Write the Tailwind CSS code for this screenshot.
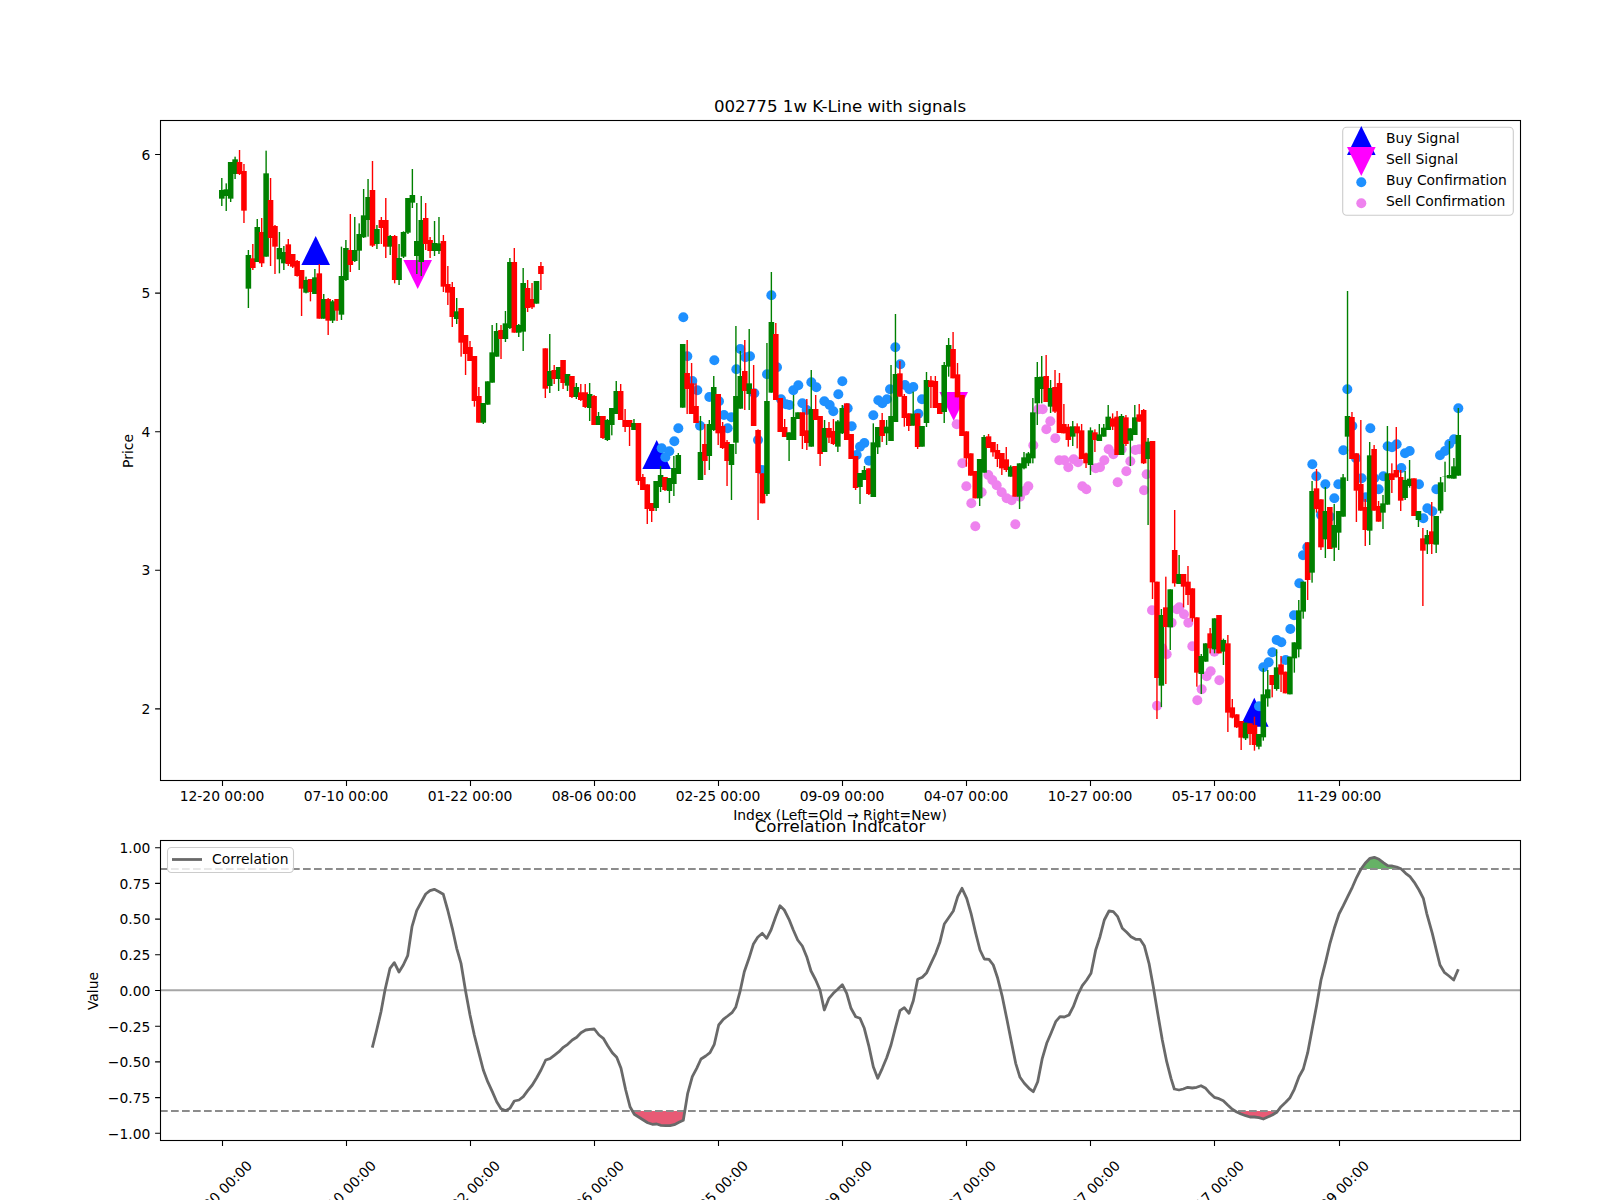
<!DOCTYPE html>
<html lang="en">

<head>
  <meta charset="UTF-8">
  <title>002775 1w K-Line with signals</title>
  <script src="https://cdn.jsdelivr.net/npm/@tailwindcss/browser@4"></script>
</head>

<body class="bg-white">
  <div class="w-[1600px] h-[1200px] overflow-hidden">
    <svg id="fig" width="1600" height="1200" viewBox="0 0 1600 1200" class="block font-['DejaVu_Sans',sans-serif] text-[13.89px] fill-black">
      <defs>
        <clipPath id="main-clip"><rect x="160" y="120" width="1360" height="660" /></clipPath>
      </defs>

      <!-- price chart: markers, then confirmations, then candles -->
      <g clip-path="url(#main-clip)">
        <g id="signals" class="fill-[#0000ff]">
          <polygon points="315.7,236 301.4,265 330,265" />
          <polygon points="656.7,440 642.4,469 671,469" />
          <polygon points="1254.3,697.7 1240,726.7 1268.6,726.7" />
        </g>
        <g class="fill-[#ff00ff]">
          <polygon points="417.7,289 403.4,260 432,260" />
          <polygon points="953.7,420.7 939.4,392 968,392" />
        </g>
        <g id="confirm"></g>
        <g id="candles"></g>
      </g>
      <rect x="160.5" y="120.5" width="1360" height="660" class="fill-none stroke-black" stroke-width="1.1" />

      <!-- price legend -->
      <rect x="1342.7" y="127.3" width="170.6" height="88" rx="4" class="fill-white/80 stroke-[#cccccc]" stroke-width="1.1" />
      <polygon points="1361.3,126 1347,155 1375.6,155" class="fill-[#0000ff]" />
      <polygon points="1361.3,176 1347,147 1375.6,147" class="fill-[#ff00ff]" />
      <circle cx="1361.3" cy="182.3" r="5" class="fill-[#1e90ff]" />
      <circle cx="1361.3" cy="203.3" r="5" class="fill-[#ee82ee]" />
      <text x="1386" y="143.3">Buy Signal</text>
      <text x="1386" y="164.3">Sell Signal</text>
      <text x="1386" y="185.3">Buy Confirmation</text>
      <text x="1386" y="206.3">Sell Confirmation</text>

      <text x="840" y="111.7" text-anchor="middle" class="text-[16.67px]">002775 1w K-Line with signals</text>
      <text x="840" y="820" text-anchor="middle">Index (Left=Old → Right=New)</text>
      <text text-anchor="middle" transform="translate(133 451) rotate(-90)">Price</text>

      <g id="main-yticks" text-anchor="end">
        <path d="M155.1 154.5H160M155.1 293.1H160M155.1 431.7H160M155.1 570.3H160M155.1 708.9H160" class="stroke-black fill-none" stroke-width="1.1" />
        <text x="150.3" y="159.5">6</text>
        <text x="150.3" y="298.1">5</text>
        <text x="150.3" y="436.7">4</text>
        <text x="150.3" y="575.3">3</text>
        <text x="150.3" y="713.9">2</text>
      </g>

      <g id="main-xticks" text-anchor="middle">
        <path d="M222.5 781v4.9M346.5 781v4.9M470.5 781v4.9M594.5 781v4.9M718.5 781v4.9M842.5 781v4.9M966.5 781v4.9M1090.5 781v4.9M1214.5 781v4.9M1339.5 781v4.9" class="stroke-black fill-none" stroke-width="1.1" />
        <text x="222" y="801">12-20 00:00</text>
        <text x="346" y="801">07-10 00:00</text>
        <text x="470" y="801">01-22 00:00</text>
        <text x="594" y="801">08-06 00:00</text>
        <text x="718" y="801">02-25 00:00</text>
        <text x="842" y="801">09-09 00:00</text>
        <text x="966" y="801">04-07 00:00</text>
        <text x="1090" y="801">10-27 00:00</text>
        <text x="1214" y="801">05-17 00:00</text>
        <text x="1339" y="801">11-29 00:00</text>
      </g>

      <!-- correlation chart -->
      <text x="840" y="831.7" text-anchor="middle" class="text-[16.67px]">Correlation Indicator</text>
      <g id="fills"></g>
      <path d="M160 990.3H1520" class="stroke-[#a6a6a6] fill-none" stroke-width="2" />
      <path d="M160 869H1520M160 1111H1520" class="stroke-[#8c8c8c] fill-none" stroke-width="2" stroke-dasharray="7.7 3.3" />
      <path id="corr" class="stroke-[#696969] fill-none" stroke-width="2.8" stroke-linejoin="round" />
      <rect x="160.5" y="840.5" width="1360" height="300" class="fill-none stroke-black" stroke-width="1.1" />

      <rect x="167.5" y="847.5" width="126" height="25" rx="4" class="fill-white/80 stroke-[#cccccc]" stroke-width="1.1" />
      <path d="M172 859.5H202" class="stroke-[#696969] fill-none" stroke-width="2.8" />
      <text x="212" y="864">Correlation</text>

      <text text-anchor="middle" transform="translate(98 991) rotate(-90)">Value</text>

      <g id="corr-yticks" text-anchor="end">
        <path d="M155.1 847.7H160M155.1 883.4H160M155.1 919.1H160M155.1 954.8H160M155.1 990.5H160M155.1 1026.2H160M155.1 1061.9H160M155.1 1097.6H160M155.1 1133.3H160" class="stroke-black fill-none" stroke-width="1.1" />
        <text x="150.3" y="853">1.00</text>
        <text x="150.3" y="888.7">0.75</text>
        <text x="150.3" y="924.4">0.50</text>
        <text x="150.3" y="960.1">0.25</text>
        <text x="150.3" y="995.8">0.00</text>
        <text x="150.3" y="1031.5">−0.25</text>
        <text x="150.3" y="1067.2">−0.50</text>
        <text x="150.3" y="1102.9">−0.75</text>
        <text x="150.3" y="1138.6">−1.00</text>
      </g>

      <g id="corr-xticks" text-anchor="middle">
        <path d="M222.5 1141v4.9M346.5 1141v4.9M470.5 1141v4.9M594.5 1141v4.9M718.5 1141v4.9M842.5 1141v4.9M966.5 1141v4.9M1090.5 1141v4.9M1214.5 1141v4.9M1339.5 1141v4.9" class="stroke-black fill-none" stroke-width="1.1" />
        <text y="5" transform="translate(219.5 1193) rotate(-45)">12-20 00:00</text>
        <text y="5" transform="translate(343.5 1193) rotate(-45)">07-10 00:00</text>
        <text y="5" transform="translate(467.5 1193) rotate(-45)">01-22 00:00</text>
        <text y="5" transform="translate(591.5 1193) rotate(-45)">08-06 00:00</text>
        <text y="5" transform="translate(715.5 1193) rotate(-45)">02-25 00:00</text>
        <text y="5" transform="translate(839.5 1193) rotate(-45)">09-09 00:00</text>
        <text y="5" transform="translate(963.5 1193) rotate(-45)">04-07 00:00</text>
        <text y="5" transform="translate(1087.5 1193) rotate(-45)">10-27 00:00</text>
        <text y="5" transform="translate(1211.5 1193) rotate(-45)">05-17 00:00</text>
        <text y="5" transform="translate(1336.5 1193) rotate(-45)">11-29 00:00</text>
      </g>
    </svg>
  </div>

  <script>
    const NS = 'http://www.w3.org/2000/svg';
    const X0 = 221.8, STEP = 4.432;

    function add(parent, tag, attrs) {
      const el = document.createElementNS(NS, tag);
      for (const k in attrs) el.setAttribute(k, attrs[k]);
      document.getElementById(parent).appendChild(el);
    }

    // candles read off the chart: colour, body top, body bottom, wick top, wick bottom
    // y values are crop coordinates, py = oy + v / 3
    const candleRows = [
      [110, 'g240,266,204,288 g238,258,220,303 g156,266,156,276 g148,192,140,207 r156,192,120,195 r183,302,162,339 g435,536,420,594 r445,474,402,480 g351,456,327,456 r366,460,324,471 g190,440,122,440 r270,384,204,468 r348,410,345,492 g414,448,366,490 g426,460,408,480 r403,462,387,468 r432,470,432,474 r453,498,450,500 r480,536,480,618 g510,548,500,550 r507,546,507,574 g502,552,477,552 r490,626,462,626 g567,626,552,626 r567,632,564,675 g574,632,570,639 r567,602,567,633 g498,614,410,630 g414,510,390,513 r420,465,312,486 g420,453,321,456 g372,422,340,480 g316,382,237,384 g261,330,207,380 r240,407,153,411 g357,402,345,417 r330,354,321,402 r330,410,264,444 g378,410,375,435 r378,510,375,520 g444,510,402,525 g366,440,364,444 g264,368,264,372 g255,278,177,294 g393,438,279,492 g330,456,258,498 r324,402,279,420 r390,423,381,444 g399,423,333,438 g400,423,321,432 r393,530,375,546 r522,548,468,585 r531,621,516,651 g604,627,564,642 r594,698,594,740 r675,732,675,795 r711,753,693,752 r738,873,738,890 r858,938,831,938 g879,938,879,942 g814,884,814,884 g727,818,645,818 g663,740,639,740 r660,687,645,747 g640,687,603,696 g456,654,444,657 r456,668,414,668 g645,668,642,681 g519,665,474,723 r534,594,510,606 r567,592,519,597 g513,581,513,581 r468,492,456,540'],
      [250, 'r295,416,295,444 g363,408,252,429 r360,387,345,402 g351,387,351,423 r330,399,330,417 g372,407,372,423 r378,441,378,444 g411,441,399,447 r427,450,402,453 r427,471,402,474 g432,474,399,513 r438,525,435,525 g498,525,486,525 r498,564,498,567 g510,570,507,573 g474,525,474,556 g423,492,393,492 r423,510,402,510 r510,531,477,546 r510,531,510,588 g519,540,507,540 r519,693,519,705 r681,720,672,720 r703,777,703,822 r759,783,759,816 g693,774,693,783 g675,711,648,726 r681,720,681,723 g684,723,684,759 g654,702,618,738 g615,672,609,672 g282,473,282,473 r369,417,270,492 r400,492,339,492 r468,519,400,519 g606,690,498,690 r582,633,522,675 g522,618,510,660 g411,540,378,543 r432,550,432,585 r528,594,516,597 r576,633,570,708 g582,645,582,750 g438,578,228,612 g378,476,303,476 r363,423,270,480 g400,432,237,480 r417,528,345,528 r540,669,538,810 r670,760,670,760 g453,732,279,738 g216,428,66,428 r252,450,219,450 r444,546,444,546 r531,561,507,561 g547,570,547,633 g501,570,435,570 g487,507,487,507 r487,558,487,597 r541,579,447,600 g477,590,360,590 r477,510,435,510 r498,612,498,648 g534,606,510,606 r534,563,516,579 r543,582,507,585 g514,590,510,606 g474,550,465,552 r460,570,460,570 r552,627,552,627 r618,714,618,720 g669,711,669,762 g660,690,648,690 r655,732,655,735 g577,741,520,741 g531,592,531,612 r510,558,489,576 g530,550,510,585 g498,573,345,573 g372,516,192,516 r370,440,333,440 r438,504,432,530 r490,528,490,543 g491,527,425,527 r490,591,490,597 g528,590,528,590 g390,519,366,531 r391,411,378,474 r393,474,378,474 r459,492,459,492 g345,486,336,519 g285,350,264,380'],
      [320, 'r87,175,36,175 r163,232,129,232 r225,348,225,348 r334,415,334,440 r400,467,400,467 r453,535,453,535 g417,535,417,558 g351,458,345,458 r349,384,342,384 r366,397,366,410 r390,417,372,441 r399,445,399,465 r418,450,381,456 g440,470,436,470 r438,530,438,530 g430,530,430,567 g412,445,396,448 g400,430,396,438 g277,415,234,430 g171,250,126,315 g170,207,108,250 r168,246,105,246 g204,260,180,279 r201,275,150,279 r189,339,159,339 r312,340,252,340 r320,360,312,380 g319,350,303,378 r319,340,310,385 r331,417,312,417 r400,430,398,444 g331,435,322,465 r337,360,328,396 g343,363,312,363 g323,350,312,350 g290,330,255,330 r295,320,280,330 r290,405,273,405 g288,405,282,405 r292,372,285,378 g325,362,325,438 g292,345,255,345 r283,305,252,305 r270,430,267,432 g365,417,354,615 r363,787,363,837 r785,1074,785,1197 g885,1097,867,1161 r862,921,770,1092 g808,922,808,990 r690,790,570,800 g762,792,705,792 r762,800,762,862 r785,825,738,855 r805,895,805,905 r892,1058,892,1100 g1008,1062,1002,1122 g970,1025,970,1025 r940,985,924,1000 g895,988,895,1000 r885,1000,885,1000 g960,995,956,1035 r970,1178,945,1236 r1162,1193,1137,1195 r1183,1222,1183,1224 r1203,1253,1203,1290 g1208,1255,1208,1260'],
      [380, 'r1030,1062,1030,1095 r1035,1095,1010,1112 g1062,1100,1062,1108 g943,1072,865,1082 g928,955,870,980 r885,915,885,952 g862,927,808,932 r853,884,828,936 r875,940,875,940 g830,943,830,943 g787,835,787,878 g691,808,660,832 g605,695,605,716 r487,600,487,660 g333,578,303,608 r325,387,267,398 r358,502,358,510 g393,478,321,534 r381,507,381,507 g435,503,372,543 g393,458,393,510 g292,410,282,410 g108,170,-267,303 r111,237,96,237 r220,332,220,426 r312,392,120,392 r381,450,357,498 g226,452,186,495 r207,392,195,392 r378,425,363,425 g370,398,345,447 g280,374,138,374 r280,300,250,339 r270,292,141,292 r291,362,270,393 g300,354,273,360 g296,318,240,323 r295,408,295,408 g393,420,393,441 r475,512,444,678 g465,493,450,522 r454,492,366,522 g408,494,408,519 g307,392,291,400 g290,291,245,336 g285,295,183,295 g259,296,234,296 g165,287,84,287']
    ];

    let i = 0;
    candleRows.forEach(([oy, rows]) => {
      rows.split(' ').forEach(row => {
        const color = row[0] === 'g' ? '#008000' : '#ff0000';
        const [t, b, wt, wb] = row.slice(1).split(',').map(v => oy + v / 3);
        const x = X0 + STEP * i;
        add('candles', 'rect', { x: x - 0.7, y: wt, width: 1.4, height: wb - wt, fill: color });
        add('candles', 'rect', { x: x - 2.78, y: t, width: 5.56, height: b - t, fill: color });
        i++;
      });
    });

    // confirmation dots, crop coordinates again: [ox, oy, 'x,y x,y ...']
    const buyDots = [
      [530, 250, '460,202 472,319 487,393 502,421 395,595 418,604 406,622 433,574 445,535 510,527 553,331 538,441 567,454 582,495 604,502 593,535 619,358 631,297 646,322 660,319 673,430 684,570 696,660 724,136 711,373 741,352 753,448 768,463 778,465 790,421 805,406 817,460 830,480 844,397 859,412 883,454 899,465 910,484 925,433 937,394 953,475 965,529 980,615 990,590 1003,579 1017,632 1030,496 1045,451 1057,460 1071,448 1080,418 1096,292 1111,343 1125,405 1138,418 1150,411 1165,491 1176,448'],
      [1220, 380, '382,28 715,85 397,138 451,145 370,211 277,253 289,289 316,313 355,313 343,355 303,405 330,410 425,295 408,235 463,295 476,328 437,352 490,289 503,199 516,202 530,193 555,220 569,213 544,264 597,313 649,328 622,385 637,394 610,415 660,226 675,213 688,192 702,178 262,502 249,526 238,610 222,706 211,747 170,780 184,787 157,817 146,847 130,862 197,840 117,979']
    ];
    const sellDots = [
      [930, 320, '80,313 97,430 109,499 124,550 136,619 155,517 175,465 187,480 200,496 215,517 230,535 245,541 256,613 270,530 285,512 295,499 310,376 325,268 338,268 361,304 349,328 376,355 388,421 403,421 415,442 431,418 444,427 457,499 469,508 497,445 510,442 523,421 536,388 550,403 575,388 563,487 589,454 601,424 616,390 628,388 650,463 642,511 666,871 681,1157 710,1003 697,985 725,908 741,868 748,862 762,883 775,908 787,979 802,1141 815,1108 830,1069 842,1054 853,995 868,1081']
    ];
    function dots(list, color) {
      list.forEach(([ox, oy, pts]) => {
        pts.split(' ').forEach(p => {
          const [x, y] = p.split(',').map(Number);
          add('confirm', 'circle', { cx: ox + x / 3, cy: oy + y / 3, r: 5, fill: color });
        });
      });
    }
    dots(buyDots, '#1e90ff');
    dots(sellDots, '#ee82ee');

    // correlation line
    const corrRows = [
      [80, '877,863 890,810 903,755 915,690 930,625 943,608 957,636 970,615 983,587 996,500 1010,452 1023,428 1037,402 1050,392 1063,388 1077,395 1090,403 1103,450 1117,505 1130,565 1143,610 1157,695 1170,765 1183,825 1197,880 1210,930 1223,965 1237,995 1250,1025 1263,1046 1277,1052 1290,1045 1303,1023 1317,1020 1330,1010 1343,992 1357,975 1370,953 1383,930 1397,900 1410,896 1423,886 1437,875 1450,862 1463,853 1477,840 1490,832 1503,818 1517,810 1530,808 1543,807'],
      [590, '27,825 40,835 53,857 67,878 80,892 93,925 107,990 120,1040 133,1063 147,1072 160,1080 173,1088 187,1093 200,1092 213,1096 227,1097 240,1097 253,1094 267,1087 280,1081 293,1000 307,950 320,925 333,897 347,888 360,878 373,853 386,795 400,778 413,768 427,757 437,742 450,695 463,635 477,595 490,553 503,532 517,520 530,535 543,510 557,470 570,437 583,450 597,478 610,510 623,540 637,558 650,590 663,633 677,660 690,690 703,750 717,715 730,700 743,688 757,674 770,700 783,745 797,770 810,775 823,805 837,860 850,920 863,955 877,925 890,893 903,855 917,800 930,752 943,743 957,760 970,722 983,658 997,652 1010,638 1023,610 1037,580 1050,545 1063,492 1077,472 1090,453 1103,410 1116,385 1130,415 1143,460 1157,520 1170,570 1183,597 1197,598 1210,615 1223,655 1237,710 1250,775 1263,840 1277,910 1290,952 1303,970 1317,985 1330,995 1343,965 1357,895 1370,850 1383,820 1397,785 1410,770 1423,771 1437,765 1450,740 1463,705 1477,677 1490,660 1503,640 1517,570 1530,530 1543,480'],
      [1090, '57,453 70,455 83,470 97,505 110,517 123,530 137,538 150,538 163,557 177,610 190,680 203,760 217,840 230,905 243,955 253,987 267,990 280,987 293,982 307,984 320,982 333,977 347,985 360,1000 373,1012 387,1016 400,1022 413,1035 427,1048 440,1056 453,1062 467,1067 480,1071 493,1071 507,1073 520,1077 533,1071 547,1065 560,1057 573,1040 587,1027 600,1013 613,988 627,950 640,927 653,878 667,805 680,735 693,660 707,605 720,550 733,505 747,462 760,437 773,410 787,382 800,352 813,327 827,308 840,295 853,292 867,298 880,308 893,317 907,318 920,321 933,326 947,340 960,350 973,367 987,390 1000,415 1010,460 1027,520 1040,575 1050,615 1063,637 1077,648 1091,660 1105,628']
    ];
    const line = [];
    corrRows.forEach(([ox, pts]) => {
      pts.split(' ').forEach(p => {
        const [x, y] = p.split(',').map(Number);
        line.push([ox + x / 3, 760 + y / 3]);
      });
    });
    document.getElementById('corr').setAttribute('d', 'M' + line.map(p => p[0].toFixed(1) + ' ' + p[1].toFixed(1)).join('L'));

    // shaded parts beyond the two thresholds
    function shade(x1, x2, level, color) {
      const inside = line.filter(p => p[0] > x1 && p[0] < x2);
      const pts = [[x1, level], ...inside, [x2, level]];
      add('fills', 'polygon', { points: pts.map(p => p.join(',')).join(' '), fill: color });
    }
    shade(632, 684, 1111, '#e85a75');
    shade(1236.5, 1278, 1111, '#e85a75');
    shade(1361, 1399, 869, '#66b266');
  </script>
</body>

</html>
